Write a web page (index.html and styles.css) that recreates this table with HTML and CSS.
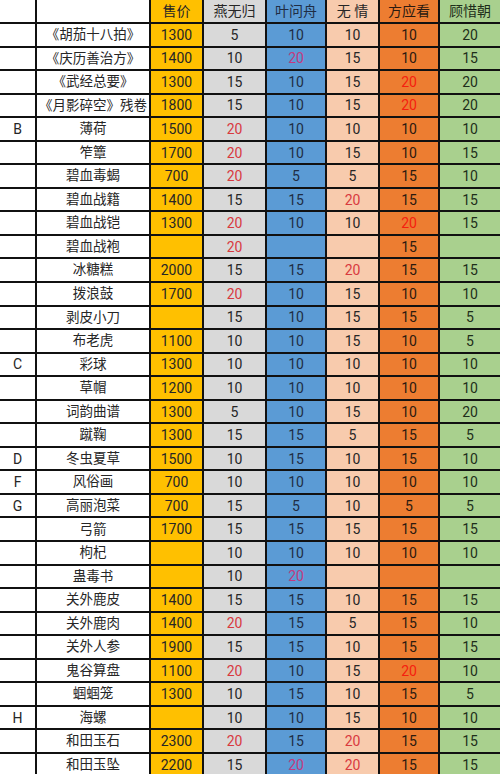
FILE: index.html
```html
<!DOCTYPE html>
<html lang="zh">
<head>
<meta charset="utf-8">
<title>礼物喜好表</title>
<link rel="stylesheet" href="styles.css">
</head>
<body>
<div class="sheet">
<div></div><div></div><div>售价</div><div>燕无归</div><div>叶问舟</div><div>无 情</div><div>方应看</div><div>顾惜朝</div>
<div></div><div>《胡茄十八拍》</div><div>1300</div><div>5</div><div>10</div><div>10</div><div>10</div><div>20</div>
<div></div><div>《庆历善治方》</div><div>1400</div><div>10</div><div class="hi">20</div><div>15</div><div>10</div><div>15</div>
<div></div><div>《武经总要》</div><div>1300</div><div>15</div><div>10</div><div>15</div><div class="hi">20</div><div>20</div>
<div></div><div>《月影碎空》残卷</div><div>1800</div><div>15</div><div>10</div><div>15</div><div class="hi">20</div><div>20</div>
<div>B</div><div>薄荷</div><div>1500</div><div class="hi">20</div><div>10</div><div>10</div><div>10</div><div>10</div>
<div></div><div>笮簟</div><div>1700</div><div class="hi">20</div><div>10</div><div>15</div><div>10</div><div>15</div>
<div></div><div>碧血毒蝎</div><div>700</div><div class="hi">20</div><div>5</div><div>5</div><div>15</div><div>10</div>
<div></div><div>碧血战籍</div><div>1400</div><div>15</div><div>15</div><div class="hi">20</div><div>15</div><div>15</div>
<div></div><div>碧血战铠</div><div>1300</div><div class="hi">20</div><div>10</div><div>10</div><div class="hi">20</div><div>15</div>
<div></div><div>碧血战袍</div><div></div><div class="hi">20</div><div></div><div></div><div>15</div><div></div>
<div></div><div>冰糖糕</div><div>2000</div><div>15</div><div>15</div><div class="hi">20</div><div>15</div><div>15</div>
<div></div><div>拨浪鼓</div><div>1700</div><div class="hi">20</div><div>10</div><div>15</div><div>10</div><div>10</div>
<div></div><div>剥皮小刀</div><div></div><div>15</div><div>10</div><div>15</div><div>15</div><div>5</div>
<div></div><div>布老虎</div><div>1100</div><div>10</div><div>10</div><div>15</div><div>10</div><div>5</div>
<div>C</div><div>彩球</div><div>1300</div><div>10</div><div>10</div><div>10</div><div>10</div><div>10</div>
<div></div><div>草帽</div><div>1200</div><div>10</div><div>10</div><div>10</div><div>10</div><div>10</div>
<div></div><div>词韵曲谱</div><div>1300</div><div>5</div><div>10</div><div>15</div><div>10</div><div>20</div>
<div></div><div>蹴鞠</div><div>1300</div><div>15</div><div>15</div><div>5</div><div>15</div><div>5</div>
<div>D</div><div>冬虫夏草</div><div>1500</div><div>10</div><div>15</div><div>10</div><div>15</div><div>10</div>
<div>F</div><div>风俗画</div><div>700</div><div>10</div><div>10</div><div>10</div><div>10</div><div>10</div>
<div>G</div><div>高丽泡菜</div><div>700</div><div>15</div><div>5</div><div>10</div><div>5</div><div>5</div>
<div></div><div>弓箭</div><div>1700</div><div>15</div><div>15</div><div>15</div><div>15</div><div>15</div>
<div></div><div>枸杞</div><div></div><div>10</div><div>10</div><div>10</div><div>10</div><div>10</div>
<div></div><div>蛊毒书</div><div></div><div>10</div><div class="hi">20</div><div></div><div></div><div></div>
<div></div><div>关外鹿皮</div><div>1400</div><div>15</div><div>15</div><div>10</div><div>15</div><div>15</div>
<div></div><div>关外鹿肉</div><div>1400</div><div class="hi">20</div><div>15</div><div>5</div><div>15</div><div>10</div>
<div></div><div>关外人参</div><div>1900</div><div>15</div><div>15</div><div>10</div><div>15</div><div>15</div>
<div></div><div>鬼谷算盘</div><div>1100</div><div class="hi">20</div><div>10</div><div>15</div><div class="hi">20</div><div>10</div>
<div></div><div>蝈蝈笼</div><div>1300</div><div>10</div><div>15</div><div>10</div><div>15</div><div>5</div>
<div>H</div><div>海螺</div><div></div><div>10</div><div>10</div><div>15</div><div>10</div><div>10</div>
<div></div><div>和田玉石</div><div>2300</div><div class="hi">20</div><div>15</div><div class="hi">20</div><div>15</div><div>15</div>
<div></div><div>和田玉坠</div><div>2200</div><div>15</div><div class="hi">20</div><div class="hi">20</div><div>15</div><div>15</div>
</div>
</body>
</html>
```
FILE: styles.css
```css
html, body {
  margin: 0;
  padding: 0;
  background: #000;
  overflow: hidden;
}

.sheet {
  display: grid;
  grid-template-columns: 35px 112px 51px 61px 58px 51px 58px 60px;
  grid-template-rows: 22px;
  grid-auto-rows: 21.55px;
  gap: 2px;
  width: 500px;
  background: #111;
  font-family: "Roboto", "Noto Sans CJK SC", sans-serif;
  font-size: 14px;
  color: #262626;
}

.sheet > div {
  display: flex;
  align-items: center;
  justify-content: center;
  white-space: nowrap;
  overflow: hidden;
  background: #fff;
  line-height: 1;
}

.sheet > :nth-child(8n+2) { font-size: 13.5px; }
.sheet > :nth-child(8n+3) { background: #ffc000; }
.sheet > :nth-child(8n+4) { background: #d9d9d9; }
.sheet > :nth-child(8n+5) { background: #5b9bd5; color: #1f2d44; }
.sheet > :nth-child(8n+6) { background: #f8cbad; }
.sheet > :nth-child(8n+7) { background: #ed7d31; color: #2b1a10; }
.sheet > :nth-child(8n) { background: #a9d08e; color: #1e2e1a; }

.sheet > .hi { color: #d83a3f; }
.sheet > :nth-child(8n+5).hi { color: #c23a80; }
.sheet > :nth-child(8n+7).hi { color: #f5200f; }
```
